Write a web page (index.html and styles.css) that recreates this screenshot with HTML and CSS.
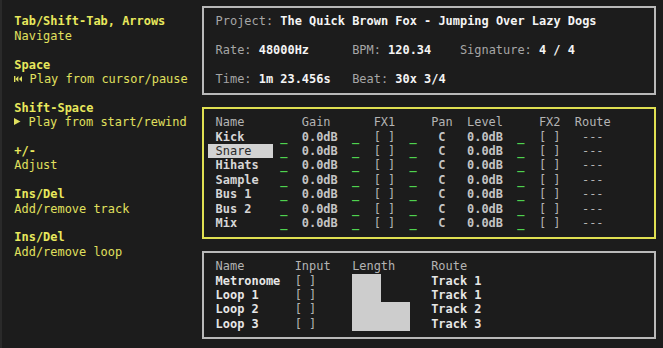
FILE: index.html
```html
<!DOCTYPE html>
<html lang="en">
<head>
    <meta charset="UTF-8">
    <meta name="viewport" content="width=device-width, initial-scale=1.0">
    <title>Tracker</title>
    <link rel="stylesheet" href="styles.css">
</head>
<body>

    <div class="screen">

        <!-- Key help -->
        <aside class="keys">
            <div class="key">
                <b>Tab/Shift-Tab, Arrows</b>
                <span>Navigate</span>
            </div>
            <div class="key">
                <b>Space</b>
                <span><svg class="icon" width="8" height="6" viewBox="0 0 8 6"><rect x="0" y="0" width="1.4" height="6"/><polygon points="4.4,0 4.4,6 1.4,3"/><polygon points="8,0 8,6 5,3"/></svg> Play from cursor/pause</span>
            </div>
            <div class="key">
                <b>Shift-Space</b>
                <span><svg class="icon" width="7" height="7" viewBox="0 0 7 7"><polygon points="0,0 6.5,3.5 0,7"/></svg> Play from start/rewind</span>
            </div>
            <div class="key">
                <b>+/-</b>
                <span>Adjust</span>
            </div>
            <div class="key">
                <b>Ins/Del</b>
                <span>Add/remove track</span>
            </div>
            <div class="key">
                <b>Ins/Del</b>
                <span>Add/remove loop</span>
            </div>
        </aside>

        <main class="panels">

            <!-- Project info -->
            <section class="box info">
                <p><span class="lbl">Project:</span> <b>The Quick Brown Fox - Jumping Over Lazy Dogs</b></p>
                <div class="stats">
                    <span><span class="lbl">Rate:</span> <b>48000Hz</b></span>
                    <span><span class="lbl">BPM:</span> <b>120.34</b></span>
                    <span><span class="lbl">Signature:</span> <b>4 / 4</b></span>
                </div>
                <div class="stats">
                    <span><span class="lbl">Time:</span> <b>1m 23.456s</b></span>
                    <span><span class="lbl">Beat:</span> <b>30x 3/4</b></span>
                </div>
            </section>

            <!-- Tracks -->
            <section class="box tracks focused">
                <div class="row head">
                    <span class="name">Name</span><span></span><span>Gain</span><span></span>
                    <span>FX1</span><span></span><span>Pan</span><span>Level</span><span></span>
                    <span>FX2</span><span>Route</span>
                </div>
                <div class="row">
                    <span class="name">Kick</span><span class="meter m1">_</span><span class="val">0.0dB</span><span class="meter">_</span>
                    <span>[ ]</span><span class="meter">_</span><span class="val pan">C</span><span class="val">0.0dB</span><span class="meter">_</span>
                    <span>[ ]</span><span class="route">---</span>
                </div>
                <div class="row">
                    <span class="name selected">Snare</span><span class="meter m1">_</span><span class="val">0.0dB</span><span class="meter">_</span>
                    <span>[ ]</span><span class="meter">_</span><span class="val pan">C</span><span class="val">0.0dB</span><span class="meter">_</span>
                    <span>[ ]</span><span class="route">---</span>
                </div>
                <div class="row">
                    <span class="name">Hihats</span><span class="meter m1">_</span><span class="val">0.0dB</span><span class="meter">_</span>
                    <span>[ ]</span><span class="meter">_</span><span class="val pan">C</span><span class="val">0.0dB</span><span class="meter">_</span>
                    <span>[ ]</span><span class="route">---</span>
                </div>
                <div class="row">
                    <span class="name">Sample</span><span class="meter m1">_</span><span class="val">0.0dB</span><span class="meter">_</span>
                    <span>[ ]</span><span class="meter">_</span><span class="val pan">C</span><span class="val">0.0dB</span><span class="meter">_</span>
                    <span>[ ]</span><span class="route">---</span>
                </div>
                <div class="row">
                    <span class="name">Bus 1</span><span class="meter m1">_</span><span class="val">0.0dB</span><span class="meter">_</span>
                    <span>[ ]</span><span class="meter">_</span><span class="val pan">C</span><span class="val">0.0dB</span><span class="meter">_</span>
                    <span>[ ]</span><span class="route">---</span>
                </div>
                <div class="row">
                    <span class="name">Bus 2</span><span class="meter m1">_</span><span class="val">0.0dB</span><span class="meter">_</span>
                    <span>[ ]</span><span class="meter">_</span><span class="val pan">C</span><span class="val">0.0dB</span><span class="meter">_</span>
                    <span>[ ]</span><span class="route">---</span>
                </div>
                <div class="row">
                    <span class="name">Mix</span><span class="meter m1">_</span><span class="val">0.0dB</span><span class="meter">_</span>
                    <span>[ ]</span><span class="meter">_</span><span class="val pan">C</span><span class="val">0.0dB</span><span class="meter">_</span>
                    <span>[ ]</span><span class="route">---</span>
                </div>
            </section>

            <!-- Loops -->
            <section class="box loops">
                <span>Name</span><span>Input</span><span>Length</span><span>Route</span>
                <div class="length">
                    <div class="len-a"></div>
                    <div class="len-b"></div>
                </div>
                <b>Metronome</b><span>[ ]</span><b>Track 1</b>
                <b>Loop 1</b><span>[ ]</span><b>Track 1</b>
                <b>Loop 2</b><span>[ ]</span><b>Track 2</b>
                <b>Loop 3</b><span>[ ]</span><b>Track 3</b>
            </section>

        </main>
    </div>

</body>
</html>
```

FILE: styles.css
```css
/* Global Styles */
body {
    margin: 0;
    background: #1c1c1c;
    font-family: "DejaVu Sans Mono", "Liberation Mono", monospace;
    font-size: 11.95px;
    line-height: 14.4px;
    color: #b4b4b4;
}

p {
    margin: 0;
}

b {
    font-weight: bold;
}

.screen {
    display: grid;
    grid-template-columns: 28ch 455px;
    height: 348px;
    box-shadow: inset 2px 0 #2a2a2a;
}

/* Key help */
.keys {
    padding: 14.4px 0 0 2ch;
    color: #e0e05e;
}

.keys b {
    color: #e8e85c;
}

.key {
    display: flex;
    flex-direction: column;
    margin-bottom: 14.4px;
    white-space: pre;
}

.icon {
    fill: #e0e05e;
    vertical-align: 1px;
}

/* Boxes */
.panels {
    margin-left: 1px;
}

.box {
    border: 2px solid #b9b9b9;
    padding: 6.2px 0;
    margin-top: 12.4px;
}

.box.info {
    margin-top: 6.2px;
    padding-left: calc(2ch - 3px);
    display: flex;
    flex-direction: column;
    gap: 14.4px;
}

.box.focused {
    border-color: #e0e052;
}

.lbl {
    color: #a6a6a6;
}

.info b {
    color: #f4f4f4;
}

.stats {
    display: grid;
    grid-template-columns: 19ch 15ch auto;
    white-space: pre;
}

/* Tracks */
.tracks {
    padding-left: calc(1ch - 3px);
}

.row {
    display: grid;
    grid-template-columns: 9ch 4ch 7ch 3ch 5ch 3ch 5ch 7ch 3ch 5ch auto;
    white-space: pre;
}

.row .name {
    padding-left: 1ch;
}

.row:not(.head) .name {
    font-weight: bold;
    color: #d6d6d6;
}

.row .name.selected {
    background: #d2d2d2;
    color: #2a2a2a;
    font-weight: normal;
}

.meter {
    color: #4fd24f;
    font-weight: bold;
}

.meter.m1,
.pan,
.route {
    padding-left: 1ch;
}

.val {
    font-weight: bold;
    color: #c4c4c4;
}

/* Loops */
.loops {
    padding-left: calc(2ch - 3px);
    display: grid;
    grid-template-columns: 11ch 8ch 11ch auto;
}

.loops > span,
.loops > b {
    white-space: pre;
}

.loops b {
    color: #e6e6e6;
}

.length {
    grid-column: 3;
    grid-row: 2 / span 4;
}

.len-a,
.len-b {
    background: #cdcdcd;
    height: 28.8px;
}

.len-a {
    width: 4ch;
}

.len-b {
    width: 8ch;
}
```
